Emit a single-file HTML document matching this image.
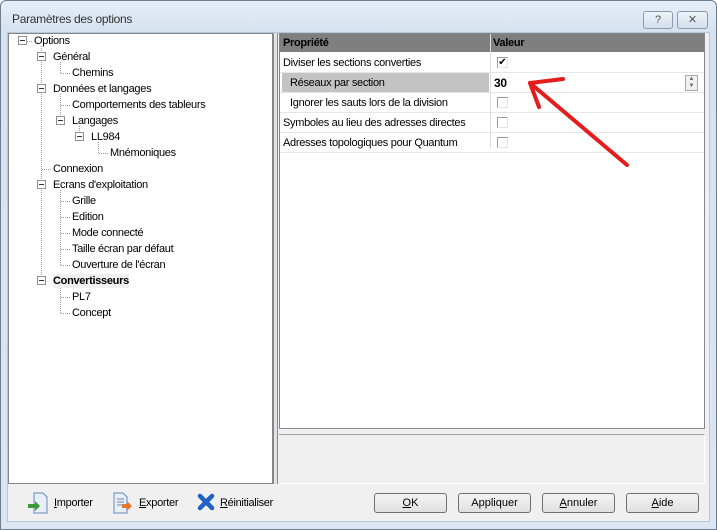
<!DOCTYPE html>
<html><head><meta charset="utf-8"><style>
*{margin:0;padding:0;box-sizing:border-box}
body{width:717px;height:530px;overflow:hidden;background:#fff;font-family:"Liberation Sans",sans-serif;font-size:11px;color:#000;position:relative}
.abs{position:absolute}
.frame{left:0;top:0;width:717px;height:530px;border:1px solid #6d7d90;border-radius:6px 6px 0 0;background:linear-gradient(#e6eef8,#d6e2ef 30px,#dbe6f2);}
.inner{left:7px;top:32px;width:703px;height:490px;background:#f0f0f0;border:1px solid #b9c6d4}
.t{position:absolute;white-space:nowrap;letter-spacing:-0.3px;line-height:14px}
.box{position:absolute;width:9px;height:9px;border:1px solid #919191;background:#fff}
.box:after{content:"";position:absolute;left:1px;top:3px;width:5px;height:1px;background:#333}
.vl{position:absolute;border-left:1px dotted #999;width:0}
.hl{position:absolute;border-top:1px dotted #999;height:0}
.row{position:absolute;left:280px;width:424px;height:20px;border-bottom:1px solid #e6e6e6}
.cb{position:absolute;left:497px;width:11px;height:11px;border-left:1px solid #9a9a9a;border-top:1px solid #9a9a9a;border-right:1px solid #e4e4e4;border-bottom:1px solid #e4e4e4;background:#fff}
.btn{position:absolute;top:493px;height:20px;width:73px;border:1px solid #707070;border-radius:3px;background:linear-gradient(#f4f4f4,#e0e0e0);text-align:center;line-height:18px;font-size:11px}
</style></head><body>
<div class="abs frame"></div>
<div class="t" style="left:12px;top:12px;font-size:12px;color:#333">Paramètres des options</div>
<div class="abs" style="left:643px;top:11px;width:30px;height:18px;border:1px solid #8a9aab;border-radius:3px;background:linear-gradient(#eef3f9,#d3dfec);text-align:center;font-size:11px;color:#555;line-height:16px">?</div>
<div class="abs" style="left:677px;top:11px;width:31px;height:18px;border:1px solid #8a9aab;border-radius:3px;background:linear-gradient(#eef3f9,#d3dfec);text-align:center;font-size:11px;color:#555;line-height:16px">✕</div>
<div class="abs inner"></div>
<!-- left tree -->
<div class="abs" style="left:8px;top:33px;width:265px;height:451px;background:#fff;border:1px solid #828790"></div>
<div class="abs" style="left:273px;top:33px;width:5px;height:451px;background:#e4e4e4;border-left:1px solid #888;border-right:1px solid #888"></div>
<div class="vl" style="left:41px;top:46px;height:235px"></div>
<div class="vl" style="left:60px;top:62px;height:11px"></div>
<div class="vl" style="left:60px;top:94px;height:27px"></div>
<div class="vl" style="left:79px;top:126px;height:11px"></div>
<div class="vl" style="left:98px;top:142px;height:11px"></div>
<div class="vl" style="left:60px;top:190px;height:75px"></div>
<div class="vl" style="left:60px;top:286px;height:27px"></div>
<div class="hl" style="left:27px;top:41px;width:5px"></div>
<div class="box" style="left:18px;top:36px"></div><div class="t" style="left:34px;top:34px">Options</div>
<div class="box" style="left:37px;top:52px"></div><div class="t" style="left:53px;top:50px">Général</div>
<div class="hl" style="left:61px;top:73px;width:9px"></div><div class="t" style="left:72px;top:66px">Chemins</div>
<div class="box" style="left:37px;top:84px"></div><div class="t" style="left:53px;top:82px">Données et langages</div>
<div class="hl" style="left:61px;top:105px;width:9px"></div><div class="t" style="left:72px;top:98px">Comportements des tableurs</div>
<div class="box" style="left:56px;top:116px"></div><div class="t" style="left:72px;top:114px">Langages</div>
<div class="box" style="left:75px;top:132px"></div><div class="t" style="left:91px;top:130px">LL984</div>
<div class="hl" style="left:99px;top:153px;width:9px"></div><div class="t" style="left:110px;top:146px">Mnémoniques</div>
<div class="hl" style="left:42px;top:169px;width:9px"></div><div class="t" style="left:53px;top:162px">Connexion</div>
<div class="box" style="left:37px;top:180px"></div><div class="t" style="left:53px;top:178px">Ecrans d'exploitation</div>
<div class="hl" style="left:61px;top:201px;width:9px"></div><div class="t" style="left:72px;top:194px">Grille</div>
<div class="hl" style="left:61px;top:217px;width:9px"></div><div class="t" style="left:72px;top:210px">Edition</div>
<div class="hl" style="left:61px;top:233px;width:9px"></div><div class="t" style="left:72px;top:226px">Mode connecté</div>
<div class="hl" style="left:61px;top:249px;width:9px"></div><div class="t" style="left:72px;top:242px">Taille écran par défaut</div>
<div class="hl" style="left:61px;top:265px;width:9px"></div><div class="t" style="left:72px;top:258px">Ouverture de l'écran</div>
<div class="box" style="left:37px;top:276px"></div><div class="t" style="left:53px;top:274px;font-weight:bold;background:#f0f0f0">Convertisseurs</div>
<div class="hl" style="left:61px;top:297px;width:9px"></div><div class="t" style="left:72px;top:290px">PL7</div>
<div class="hl" style="left:61px;top:313px;width:9px"></div><div class="t" style="left:72px;top:306px">Concept</div>
<!-- grid -->
<div class="abs" style="left:279px;top:33px;width:426px;height:396px;background:#fff;border:1px solid #828790"></div>
<div class="abs" style="left:280px;top:34px;width:424px;height:18px;background:#7f7f7f"></div>
<div class="abs" style="left:490px;top:34px;width:1px;height:115px;background:#ddd"></div>
<div class="t" style="left:283px;top:36px;font-weight:bold">Propriété</div>
<div class="t" style="left:493px;top:36px;font-weight:bold">Valeur</div>
<div class="row" style="top:53px"></div>
<div class="t" style="left:283px;top:56px">Diviser les sections converties</div>
<div class="cb" style="top:57px;font-size:10px;line-height:9px;text-align:center">✔</div>
<div class="row" style="top:73px"></div>
<div class="abs" style="left:282px;top:73px;width:207px;height:19px;background:#c3c3c3"></div>
<div class="t" style="left:290px;top:76px">Réseaux par section</div>
<div class="t" style="left:494px;top:76px;font-weight:bold;font-size:12px">30</div>
<div class="abs" style="left:685px;top:75px;width:13px;height:16px;border:1px solid #aaa;background:#f0f0f0;font-size:6px;text-align:center;line-height:7px;color:#666">▲<br>▼</div>
<div class="row" style="top:93px"></div>
<div class="t" style="left:290px;top:96px">Ignorer les sauts lors de la division</div>
<div class="cb" style="top:97px"></div>
<div class="row" style="top:113px"></div>
<div class="t" style="left:283px;top:116px">Symboles au lieu des adresses directes</div>
<div class="cb" style="top:117px"></div>
<div class="row" style="top:133px"></div>
<div class="t" style="left:283px;top:136px">Adresses topologiques pour Quantum</div>
<div class="cb" style="top:137px"></div>
<div class="abs" style="left:279px;top:434px;width:426px;height:50px;border-top:1px solid #a0a0a0;border-right:1px solid #fff;border-bottom:1px solid #fff"></div>
<!-- arrow -->
<svg class="abs" style="left:0;top:0" width="717" height="530">
<path d="M627 165 L530 83" stroke="#e51c1c" stroke-width="4" fill="none" stroke-linecap="round"/>
<path d="M530 83 L563 79 M530 83 L539 107" stroke="#e51c1c" stroke-width="4" fill="none" stroke-linecap="round"/>
</svg>
<!-- bottom -->
<svg class="abs" style="left:27px;top:492px" width="22" height="22"><path d="M7 1h9l4 4v16H7z" fill="#e8eef8" stroke="#6a88b8"/><path d="M1 12h7v-3l5 5-5 5v-3H1z" fill="#3a9a3a"/></svg>
<div class="t" style="left:54px;top:496px"><u>I</u>mporter</div>
<svg class="abs" style="left:112px;top:492px" width="22" height="22"><path d="M2 1h9l4 4v16H2z" fill="#e8eef8" stroke="#6a88b8"/><path d="M5 7h7M5 10h7M5 13h5" stroke="#6a88b8"/><path d="M10 12h5v-3l5 5-5 5v-3h-5z" fill="#e8782a"/></svg>
<div class="t" style="left:139px;top:496px"><u>E</u>xporter</div>
<svg class="abs" style="left:197px;top:493px" width="18" height="18"><path d="M3 3L15 15M15 3L3 15" stroke="#2360c8" stroke-width="4.5" stroke-linecap="round"/></svg>
<div class="t" style="left:220px;top:496px"><u>R</u>éinitialiser</div>
<div class="btn" style="left:374px"><u>O</u>K</div>
<div class="btn" style="left:458px">Appliquer</div>
<div class="btn" style="left:542px"><u>A</u>nnuler</div>
<div class="btn" style="left:626px"><u>A</u>ide</div>
</body></html>
